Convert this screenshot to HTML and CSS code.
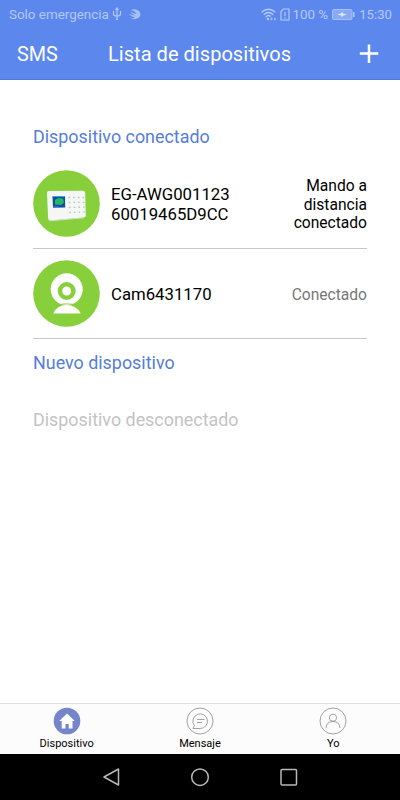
FILE: index.html
```html
<!DOCTYPE html>
<html lang="es">
<head>
<meta charset="utf-8">
<title>Lista de dispositivos</title>
<link rel="stylesheet" href="styles.css">
</head>
<body>
<div class="screen">
  <header class="top">
    <div class="status">
      <span class="carrier">Solo emergencia</span>
      <svg class="usb" width="10" height="14" viewBox="0 0 10 14" fill="none" stroke="currentColor" stroke-width="1.200"><path d="M5 1v11M1.500 4v3q0 2 3.500 2M8.500 4v3q0 2-3.500 2M3.500 3L5 1l1.500 2M4 12.500h2"/></svg>
      <svg class="swift" width="13" height="11" viewBox="0 0 13 11" fill="currentColor"><path d="M2.500.8Q8-.8 11 2q3 3.500 0 6.500-4 3-9.500.5 4 .5 5.500-.5Q3 7.800.3 4.500 4 6.600 7 6.500 4 5 1.500 2.300 6 4.800 8.500 5 7 2 2.500.8z" opacity=".85"/></svg>
      <span class="spacer"></span>
      <svg class="wifi" width="16" height="13" viewBox="0 0 16 13" fill="none" stroke="currentColor" stroke-width="1.300"><path d="M.7 4.200Q7.500-1.800 14.300 4.200M2.700 6.700Q7.500 2.300 12.300 6.700M4.700 9Q7.500 6.200 9.800 8.500"/><circle cx="7" cy="11" r=".6"/><path d="M9.500 11l1.500-1.200v2.400zM15 11l-1.500-1.200v2.400z" stroke-width=".5" fill="currentColor"/></svg>
      <svg class="sim" width="10" height="13" viewBox="0 0 10 13" fill="none" stroke="currentColor" stroke-width="1.200"><path d="M3.500 1H9v11H1V3.500zM5 4v4M5 9.300v1.200"/></svg>
      <span class="percent">100 %</span>
      <svg class="battery" width="23" height="11" viewBox="0 0 23 11"><rect x=".5" y=".5" width="19.500" height="10" rx="1" fill="currentColor" fill-opacity=".5" stroke="currentColor" stroke-opacity=".8"/><path d="M21.800 3v5" stroke="currentColor" stroke-width="1.500"/><path d="M5 5.500l4-1 1-1.500 1.500 1.700 3.500.8-3.500 1-1.500 1.500-1-1.500z" fill="#e0e8fd"/></svg>
      <span class="clock">15:30</span>
    </div>
    <div class="bar">
      <span class="sms">SMS</span>
      <h1>Lista de dispositivos</h1>
      <svg class="plus" width="20" height="20" viewBox="0 0 20 20"><path d="M10 .5v18.500M.8 9.500h18.500" stroke="#fff" stroke-width="2.500"/></svg>
    </div>
  </header>
  <main>
    <h2 class="connected">Dispositivo conectado</h2>
    <div class="device">
      <svg width="67" height="67" viewBox="0 0 67 67"><circle cx="33.500" cy="33.500" r="33.300" fill="#88cf3c"/><path d="M16 21l33.500-.3q2.500 0 2.700 2.200L52.800 45.500q0 2-2 2l-33.500 3q-2 0-2.200-2L14 23q0-2 2-2z" fill="#f4f7f4"/><path d="M15.300 47.800q.2 3 2.200 3l33.500-3" stroke="#d5ddd1" fill="none"/><path d="M19.500 26h12.500l.2 11.500-12.200.2z" fill="#164ca6"/><path d="M22 30l3-2 5 .5 1 4-3 2.500-6-.5z" fill="#24b764"/><path d="M19.800 26.500h12M20.500 37h5" stroke="#37a6dd"/><g stroke="#b4c1bb" stroke-width="1.300" stroke-dasharray="1.500 3.200"><path d="M35.500 27.500h16M35.700 32.500l16-.2M36 37.500l16-.4M36.200 42.500l16-.6"/></g></svg>
      <span class="name">EG-AWG001123<br>60019465D9CC</span>
      <span class="state">Mando a<br>distancia<br>conectado</span>
    </div>
    <div class="device">
      <svg width="67" height="67" viewBox="0 0 67 67"><circle cx="33.500" cy="33.500" r="33.300" fill="#88cf3c"/><circle cx="33.700" cy="29.300" r="16" fill="#fff"/><circle cx="33.700" cy="31" r="6.700" fill="none" stroke="#88cf3c" stroke-width="4.500"/><path d="M19.500 44.800Q33.700 43 48 44.800" stroke="#88cf3c" fill="none"/><path d="M20.300 53.500q3.500-8.500 13.300-8.500t14.200 8.500z" fill="#fff"/></svg>
      <span class="name">Cam6431170</span>
      <span class="state idle">Conectado</span>
    </div>
    <h2 class="new">Nuevo dispositivo</h2>
    <h2 class="offline">Dispositivo desconectado</h2>
  </main>
  <nav class="tabs">
    <div class="tab"><svg width="28" height="28" viewBox="0 0 28 28"><circle cx="14" cy="14" r="13.300" fill="#7585cc"/><path d="M14 6.500L21.800 14H19.500v7.500h-3.800v-4.500h-3.200v4.500H8.700V14H6.300z" fill="#fff"/></svg><span>Dispositivo</span></div>
    <div class="tab"><svg width="28" height="28" viewBox="0 0 28 28" fill="none" stroke="#8a8a8a" stroke-width=".8"><circle cx="14" cy="14" r="13"/><path d="M7 21.500l1.300-3a7.300 7.300 0 1 1 5.700 3zM11 12.500h7.500M11 15.500h5"/></svg><span>Mensaje</span></div>
    <div class="tab"><svg width="28" height="28" viewBox="0 0 28 28" fill="none" stroke="#8a8a8a" stroke-width=".8"><circle cx="14" cy="14" r="13"/><circle cx="14" cy="10.700" r="3.600"/><path d="M7 21q.5-6.500 7-6.500t7 6.500"/></svg><span>Yo</span></div>
  </nav>
  <footer class="system">
    <svg width="89" height="22" viewBox="0 0 89 22"><path d="M51.500 3v16L37 11z"/></svg>
    <svg width="89" height="22" viewBox="0 0 89 22"><circle cx="44" cy="11.200" r="8.300"/></svg>
    <svg width="89" height="22" viewBox="0 0 89 22"><rect x="36" y="3.500" width="15.500" height="15.500" rx="1"/></svg>
  </footer>
</div>
</body>
</html>
```
FILE: styles.css
```css
* { box-sizing: border-box; }
body { margin: 0; font-family: Roboto, "Liberation Sans", sans-serif; color: #000; background: #fff; }
svg { display: block; flex: none; }
h1, h2 { margin: 0; font-weight: 400; white-space: nowrap; }
.screen { width: 400px; height: 800px; display: flex; flex-direction: column; overflow: hidden; }
.top { height: 80px; background: #5c88ee; color: #fff; border-bottom: 1px solid #4c7cda; }
.status { height: 28px; padding: 0 8px 0 9px; display: flex; align-items: center; color: #b3c9fa; font-size: 13.400px; }
.status span { white-space: nowrap; }
.carrier { width: 99px; }
.usb { margin-left: 4px; }
.swift { margin-left: 6px; }
.spacer { flex: 1; }
.wifi { margin-right: 1px; }
.sim { margin-left: 2px; }
.percent { margin-left: 2px; }
.status .battery { margin: 0 4px; }
.status .clock { font-size: 13.200px; }
.bar { height: 52px; padding: 0 21px 0 17px; display: flex; align-items: center; }
.sms { width: 91px; font-size: 19.800px; }
h1 { flex: 1; font-size: 20.100px; }
main { flex: 1; padding: 45px 33px 0; }
h2 { font-size: 17.900px; line-height: 23px; }
.connected, .new { color: #557dd8; }
.device { height: 90px; display: flex; align-items: center; border-bottom: 1px solid #c7c7c7; }
.connected + .device { margin-top: 11px; }
.name { flex: 1; margin-left: 11px; font-size: 16.750px; line-height: 20px; }
.state { padding-top: 3px; text-align: right; font-size: 15.600px; line-height: 18.500px; }
.idle { color: #777; }
.new { margin-top: 12px; }
.offline { margin-top: 34px; color: #c3c3c3; }
.tabs { height: 51px; display: flex; background: #fcfcfc; border-top: 1px solid #dedede; }
.tab { flex: 1; display: flex; flex-direction: column; align-items: center; padding-top: 3px; font-size: 11px; line-height: 18px; }
.system { height: 46px; background: #000; display: flex; justify-content: center; align-items: center; }
.system svg { fill: none; stroke: #b8b8b8; stroke-width: 1.500; stroke-linejoin: round; }
```
